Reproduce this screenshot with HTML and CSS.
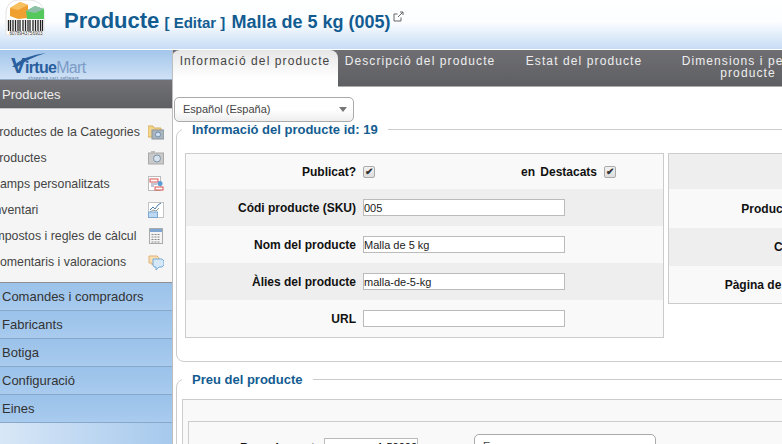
FILE: index.html
```html
<!DOCTYPE html>
<html lang="ca">
<head>
    <meta charset="UTF-8">
    <meta name="viewport" content="width=device-width, initial-scale=1.0">
    <title>Producte - Malla de 5 kg</title>
    <link rel="stylesheet" href="styles.css">
</head>
<body>
    <header class="top-bar">
        <svg class="logo-icon" width="50" height="36" viewBox="0 0 50 36">
            <path d="M6 35V11Q8 1 18 0h12q12 1 14 11v24z" fill="#fff" stroke="#e2e2e2"/>
            <path d="M10 8l10-6 8 3v13l-10 1-8-3z" fill="#f0a030"/>
            <path d="M10 8l10-6 8 3-10 5z" fill="#f7c060"/>
            <path d="M26 11l9-5 9 3v10H27z" fill="#55c85c"/>
            <path d="M26 11l9-5 9 3-9 4z" fill="#8fbfa8"/>
            <rect x="8" y="20" width="36" height="11" fill="#fff"/>
            <path d="M8.500 20v11M10.500 20v11M13 20v11M15.500 20v11M18 20v11M20 20v11M23 20v11M25.500 20v11M28 20v11M30 20v11M33 20v11M35.500 20v11M38 20v11M40.500 20v11M42.500 20v11" stroke="#222" stroke-width="1.3"/>
            <text x="26" y="35" class="logo-digits" text-anchor="middle">6078943756903</text>
        </svg>
        <h1>Producte <small>[ Editar ]</small> <span class="product-name">Malla de 5 kg (005)</span></h1>
        <svg class="ext-link" width="11" height="11" viewBox="0 0 11 11">
            <path d="M8 6.500V10H1V3h3.500M5 6l5-5M7 1h3v3" fill="none" stroke="#666"/>
        </svg>
    </header>

    <div class="layout">
        <aside class="sidebar">
            <div class="brand">
                <svg class="brand-swoosh" width="36" height="16" viewBox="0 0 36 16">
                    <path d="M1 15Q14 3 35 1Q18 6 6 15z" fill="#2a5f9e"/>
                </svg>
                <span class="brand-name"><i>V</i><b>irtue</b>Mart</span>
                <span class="brand-sub">shopping cart software</span>
            </div>
            <div class="menu-title">Productes</div>
            <ul class="submenu">
                <li><span>Productes de la Categories</span>
                    <svg width="16" height="16" viewBox="0 0 16 16"><path d="M0 2h5l1 2h7v9H0z" fill="#f3d58c" stroke="#d8b060"/><rect x="4" y="6" width="12" height="9" fill="#a9b4bd" stroke="#8a949c"/><circle cx="10" cy="10.500" r="2.500" fill="#cfe2f3" stroke="#6f8ba6"/></svg>
                </li>
                <li><span>Productes</span>
                    <svg width="16" height="16" viewBox="0 0 16 16"><rect x="0.500" y="3" width="15" height="11" fill="#c9c9c9" stroke="#aaa"/><rect x="3" y="1" width="4" height="2" fill="#bbb"/><circle cx="9" cy="8.500" r="3.500" fill="#d6e3ee" stroke="#7d93a8"/></svg>
                </li>
                <li><span>Camps personalitzats</span>
                    <svg width="16" height="16" viewBox="0 0 16 16"><rect x="0.500" y="0.500" width="12" height="14" fill="#fff" stroke="#bbb"/><rect x="2" y="3" width="8" height="3" fill="#fff" stroke="#d9534f"/><rect x="7" y="11" width="8" height="3" fill="#fff" stroke="#d9534f"/><path d="M3 8h6M3 10h3" stroke="#88a"/><circle cx="12" cy="7.500" r="2.500" fill="#5b9bd5"/></svg>
                </li>
                <li><span>Inventari</span>
                    <svg width="16" height="16" viewBox="0 0 16 16"><rect x="0.500" y="0.500" width="15" height="15" fill="#fff" stroke="#c4c4c4"/><path d="M2 8l3-3 2 2 3-4 3-2" fill="none" stroke="#4a7fb5"/><path d="M2 10l3-2 3 1 3-3" fill="none" stroke="#999"/><rect x="0.500" y="10" width="9" height="5.500" fill="#bcd8f2" stroke="#7da9d1"/></svg>
                </li>
                <li><span>Impostos i regles de càlcul</span>
                    <svg width="16" height="16" viewBox="0 0 16 16"><rect x="1.500" y="0.500" width="13" height="15" fill="#f4f4f4" stroke="#aaa"/><rect x="2" y="1" width="12" height="3" fill="#7ea6d2"/><path d="M3.500 6.500h9M3.500 9h9M3.500 11.500h9M3.500 14h9" stroke="#888" stroke-dasharray="2 1"/></svg>
                </li>
                <li><span>Comentaris i valoracions</span>
                    <svg width="16" height="16" viewBox="0 0 16 16"><path d="M1 2h8l2 2v4l-4 1-3 2V9H1z" fill="#f8e0b4" stroke="#e0b070"/><path d="M5 5h9l2 2v4l-2 2h-3l-3 3v-3H6l-1-2z" fill="#d5e8f8" stroke="#74a9d8"/></svg>
                </li>
            </ul>
            <ul class="menu">
                <li>Comandes i compradors</li>
                <li>Fabricants</li>
                <li>Botiga</li>
                <li>Configuració</li>
                <li>Eines</li>
            </ul>
        </aside>

        <main class="content">
            <ul class="tabs">
                <li class="active">Informació del producte</li>
                <li>Descripció del producte</li>
                <li>Estat del producte</li>
                <li>Dimensions i pes del producte</li>
            </ul>

            <div class="lang-select">Español (España)</div>

            <fieldset class="group">
                <legend>Informació del producte id: 19</legend>
                <div class="panels">
                    <div class="panel main-panel">
                        <div class="row">
                            <label>Publicat?</label>
                            <span class="check">&#10004;</span>
                            <label class="featured">en Destacats</label>
                            <span class="check">&#10004;</span>
                        </div>
                        <div class="row"><label>Códi producte (SKU)</label><input type="text" value="005"></div>
                        <div class="row"><label>Nom del producte</label><input type="text" value="Malla de 5 kg"></div>
                        <div class="row"><label>Àlies del producte</label><input type="text" value="malla-de-5-kg"></div>
                        <div class="row"><label>URL</label><input type="text"></div>
                    </div>
                    <div class="panel side-panel">
                        <div class="row"></div>
                        <div class="row tall"><label>Producte Layout</label></div>
                        <div class="row"><label>Categories</label></div>
                        <div class="row"><label>Pàgina de producte</label></div>
                    </div>
                </div>
            </fieldset>

            <fieldset class="group price">
                <legend>Preu del producte</legend>
                <div class="price-outer">
                    <div class="price-inner">
                        <label>Preu de cost</label>
                        <input type="text" class="cost" value="1.50000">
                        <div class="currency-select">Euro</div>
                    </div>
                </div>
            </fieldset>
        </main>
    </div>
</body>
</html>
```

FILE: styles.css
```css
/* Estils generals */
* {
    margin: 0;
    padding: 0;
    box-sizing: border-box;
}
html, body {
    height: 444px;
    overflow: hidden;
}
body {
    font-family: "Liberation Sans", Arial, sans-serif;
    font-size: 12px;
    color: #333;
    background-color: #fff;
}
ul {
    list-style: none;
}

/* Capçalera */
.top-bar {
    height: 50px;
    display: flex;
    align-items: flex-start;
    border-bottom: 1px solid #fff;
    background: linear-gradient(#fff 0%, #fbfdff 45%, #c6dcf5 100%);
}
.logo-icon {
    flex: none;
}
.logo-digits {
    font-size: 4.600px;
    fill: #333;
}
.top-bar h1 {
    margin: 8px 0 0 14px;
    font-size: 22px;
    line-height: 26px;
    color: #135c91;
    white-space: nowrap;
}
.top-bar small {
    font-size: 15px;
    margin-left: -1px;
}
.product-name {
    font-size: 18px;
}
.ext-link {
    flex: none;
    margin: 11px 0 0 2px;
}

.layout {
    display: flex;
    height: 394px;
}

/* Menú lateral */
.sidebar {
    flex: none;
    width: 173px;
    overflow: hidden;
    border-right: 1px solid #bdbdbd;
    background: linear-gradient(90deg, #d8e7f7, #a6c9ed);
}
.brand {
    position: relative;
    height: 30px;
    padding: 8px 0 0 11px;
    background: linear-gradient(#a3c6eb, #cfe1f5);
    border-bottom: 1px solid #8fa9c4;
    line-height: 1;
}
.brand-swoosh {
    position: absolute;
    top: 2px;
    left: 11px;
}
.brand-name {
    display: block;
    font-size: 16px;
    letter-spacing: -0.7px;
    color: #7c9cc6;
}
.brand-name i {
    font-size: 22px;
    font-style: normal;
    font-weight: bold;
    line-height: 16px;
    color: #2a5f9e;
}
.brand-name b {
    font-weight: bold;
    color: #2a5f9e;
}
.brand-sub {
    display: block;
    margin: 0 0 0 17px;
    font-size: 4px;
    letter-spacing: 0.5px;
    color: #44648c;
}
.menu-title {
    height: 28px;
    padding-left: 2px;
    line-height: 29px;
    font-size: 13px;
    color: #eee;
    background: linear-gradient(#727276, #5f6064);
}
.submenu {
    height: 175px;
    padding-top: 10px;
    background-color: #f5f5f5;
    border-top: 1px solid #c8c8c8;
    border-bottom: 1px solid #8f8f8f;
}
.submenu li {
    height: 26px;
    display: flex;
    align-items: center;
    justify-content: space-between;
    padding-right: 8px;
    margin-left: -9px;
    font-size: 12.350px;
    color: #444;
    white-space: nowrap;
}
.menu li {
    height: 28px;
    padding-left: 2px;
    line-height: 28px;
    font-size: 13px;
    color: #333;
    background: linear-gradient(#9bc2ea, #a8cbee);
    border-bottom: 1px solid #87a8cb;
}

/* Pestanyes */
.content {
    flex: 1;
    min-width: 0;
    overflow: hidden;
}
.tabs {
    display: flex;
    height: 37px;
    margin-left: -1px;
    background: linear-gradient(#6f6f73, #5e5f63);
    border-bottom: 1px solid #aaa;
}
.tabs li {
    flex: none;
    width: 164px;
    padding: 5px 4px 0;
    line-height: 12px;
    letter-spacing: 1.100px;
    text-align: center;
    color: #eee;
}
.tabs .active {
    width: 166px;
    height: 37px;
    color: #444;
    border-radius: 8px 8px 0 0;
    background: linear-gradient(#e6e6e6, #fff 75%);
}

.lang-select,
.currency-select {
    border: 1px solid #aaa;
    border-radius: 5px;
    background: linear-gradient(#fff 50%, #eee);
    color: #444;
    font-size: 11px;
    position: relative;
}
.lang-select {
    width: 180px;
    height: 25px;
    margin: 10px 0 0 1px;
    padding-left: 8px;
    line-height: 23px;
}
.lang-select::after {
    content: "";
    position: absolute;
    top: 9px;
    right: 6px;
    border: 4px solid transparent;
    border-top: 5px solid #777;
}

/* Grups de camps */
.group {
    margin-left: 3px;
    margin-right: -40px;
    height: 240px;
    padding: 16px 8px 0;
    border: 1px solid #ccc;
    border-radius: 8px;
}
.group legend {
    margin-left: -3px;
    padding: 0 10px;
    font-size: 13px;
    font-weight: bold;
    color: #135c91;
}
.panels {
    display: flex;
    gap: 4px;
}
.panel {
    border: 1px solid #ccc;
    background-color: #f9f9f9;
}
.main-panel {
    flex: none;
    width: 479px;
}
.side-panel {
    flex: none;
    width: 200px;
    align-self: flex-start;
}
.row {
    height: 37px;
    display: flex;
    align-items: center;
    font-weight: bold;
}
.main-panel .row:nth-child(1) {
    height: 35px;
}
.main-panel .row:nth-child(2),
.main-panel .row:nth-child(4),
.side-panel .row:nth-child(1),
.side-panel .row:nth-child(3) {
    background-color: #eee;
}
.side-panel .row:nth-child(1) {
    height: 35px;
}
.side-panel .row.tall {
    height: 39px;
}
.side-panel .row:nth-child(3) {
    height: 38px;
}
.row label {
    flex: none;
    width: 170px;
    text-align: right;
    color: #111;
    white-space: nowrap;
}
.side-panel .row label {
    width: 167px;
}
.main-panel input {
    width: 202px;
    height: 17px;
    margin-left: 7px;
    padding-left: 0;
    border: 1px solid #bbb;
    font: 11px "Liberation Sans", Arial, sans-serif;
    color: #222;
    background-color: #fff;
}
.check {
    flex: none;
    width: 12px;
    height: 12px;
    margin-left: 7px;
    border: 1px solid #aaa;
    border-radius: 2px;
    background: linear-gradient(#f2f2f2, #ddd);
    font-size: 10px;
    line-height: 10px;
    text-align: center;
    color: #333;
}
.row .featured {
    width: 222px;
    word-spacing: 2px;
}

/* Preu */
.price {
    margin-top: 10px;
    padding: 12px 5px 0;
}
.price legend {
    margin-left: 0;
}
.price-outer {
    height: 60px;
    padding: 21px 0 0 5px;
    border: 1px solid #ccc;
    background-color: #f9f9f9;
}
.price-inner {
    height: 60px;
    display: flex;
    align-items: flex-start;
    border: 1px solid #ccc;
    background-color: #f9f9f9;
}
.price-inner label {
    width: 126px;
    margin-top: 19px;
    text-align: right;
    font-size: 12.500px;
    font-weight: bold;
    color: #111;
}
.cost {
    width: 94px;
    height: 17px;
    margin: 16px 0 0 9px;
    border: 1px solid #bbb;
    text-align: right;
    font: 11px "Liberation Sans", Arial, sans-serif;
}
.currency-select {
    width: 182px;
    height: 25px;
    margin: 12px 0 0 56px;
    padding-left: 8px;
    line-height: 23px;
}
```
